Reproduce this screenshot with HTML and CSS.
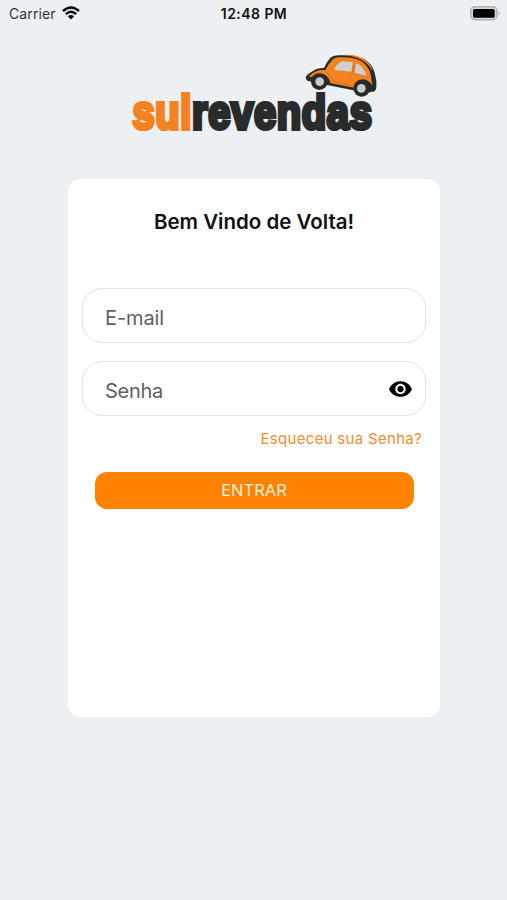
FILE: index.html
```html
<!DOCTYPE html>
<html lang="pt-BR">
<head>
<meta charset="utf-8">
<title>Sul Revendas</title>
<link rel="stylesheet" href="styles.css">
</head>
<body>
<header class="status">
  <div class="carrier"><span>Carrier</span>
    <svg class="wifi" viewBox="0 0 18 14"><g fill="none" stroke="#080808" stroke-width="2.4"><path d="M1 5Q9-2 17 5"/><path d="M3.8 8.1Q9 3.5 14.2 8.1"/></g><path fill="#080808" d="M5.9 10.2Q9 7.6 12.1 10.2L9 13.5Z"/></svg>
  </div>
  <div class="time">12:48 PM</div>
  <svg class="battery" viewBox="0 0 31 15"><rect x=".8" y=".8" width="26" height="13" rx="4" fill="#d8dadb" stroke="#b0b2b3" stroke-width="1.4"/><rect x="3" y="3" width="21.700" height="8.800" rx="1.500"/><path d="M28.400 5q2.200 2.300 0 4.600z" fill="#aaa"/></svg>
</header>
<main>
  <svg class="logo" viewBox="125 50 260 90" role="img" aria-label="sulrevendas">
    <text class="wordmark" x="132.500" y="129" textLength="240" lengthAdjust="spacingAndGlyphs"><tspan class="sul">sul</tspan><tspan class="rev">revendas</tspan></text>
    <g transform="translate(300 50) scale(.33333)">
      <path fill="#292a2a" d="M17 81Q22 72 33 67Q50 53 72 54Q80 37 90 25Q98 16 117 16L151 16Q184 19 204 36Q222 51 226 78Q231 92 229 112Q227 128 214 125L202 129L96 108L22 92Q17 88 17 81Z"/>
      <path fill="#f58220" d="M28 78Q50 57 76 61Q84 43 97 29Q106 21 125 22L152 23Q180 27 194 42Q213 60 214 87L217 108Q209 91 190 88Q169 87 161 113L91 99Q87 79 70 72Q52 68 39 79L31 82Z"/>
      <path fill="#f58220" d="M130 15Q176 11 202 36Q217 50 219 64Q201 33 170 23Q149 16 130 15Z"/>
      <path fill="#d0d0d0" d="M104 54Q114 39 128 34L159 37L154 65L105 60ZM168 40Q189 46 200 77L164 68Z"/>
      <path d="M80 66Q86 82 103 94L160 110M162 40L156 73" fill="none" stroke="#b95715" stroke-width="1.500"/>
      <circle cx="58" cy="95" r="25" fill="#292a2a"/><circle cx="59" cy="95" r="13" fill="#cacaca"/>
      <circle cx="185" cy="115" r="25" fill="#292a2a"/><circle cx="184" cy="115" r="13" fill="#cacaca"/>
    </g>
  </svg>
  <section class="card">
    <h1>Bem Vindo de Volta!</h1>
    <div class="field"><span class="email">E-mail</span></div>
    <div class="field"><span class="senha">Senha</span>
      <svg class="eye" viewBox="1 4.500 22 15"><path d="M12 4.500C7 4.500 2.730 7.610 1 12c1.730 4.390 6 7.500 11 7.500s9.270-3.110 11-7.500c-1.730-4.390-6-7.500-11-7.500zM12 17c-2.760 0-5-2.240-5-5s2.240-5 5-5 5 2.240 5 5-2.240 5-5 5zm0-8c-1.660 0-3 1.340-3 3s1.340 3 3 3 3-1.340 3-3-1.340-3-3-3z"/></svg>
    </div>
    <a class="forgot">Esqueceu sua Senha?</a>
    <button type="button">ENTRAR</button>
  </section>
</main>
</body>
</html>
```

FILE: styles.css
```css
* { box-sizing: border-box; }
body {
  margin: 0;
  height: 900px;
  background: #ecf0f3;
  color: #111;
  font-family: Inter, "Liberation Sans", sans-serif;
}
.status {
  display: grid;
  grid-template-columns: 1fr auto 1fr;
  align-items: center;
  height: 28px;
  padding: 0 6px 2px 9px;
}
.carrier { display: flex; align-items: center; gap: 6px; font-size: 14px; letter-spacing: .1px; color: #303235; }
.wifi { width: 18px; height: 14px; }
.time { margin-right: 2px; font-size: 14px; font-weight: 600; letter-spacing: .45px; }
.battery { width: 31px; height: 15px; justify-self: end; }
main { display: flex; flex-direction: column; align-items: center; }
.logo { display: block; overflow: visible; width: 260px; height: 90px; margin: 22px 0 0 3px; }
.wordmark { font: 700 49px "Liberation Sans Narrow", "Liberation Sans", sans-serif; stroke-width: 4.2; letter-spacing: .8px; }
.sul { fill: #f58220; stroke: #f58220; }
.rev { fill: #292a2a; stroke: #292a2a; }
.card {
  display: flex;
  flex-direction: column;
  width: 372px;
  height: 538px;
  margin-top: 39px;
  margin-left: 1px;
  padding: 29px 14px 0;
  background: #fff;
  border-radius: 12px;
}
h1 { margin: 0 0 53px; font-size: 20.500px; line-height: 27px; font-weight: 600; text-align: center; }
.field {
  display: flex;
  align-items: center;
  justify-content: space-between;
  height: 55px;
  margin-bottom: 18px;
  padding: 5px 13px 0 22px;
  border: 1px solid #e3e3e5;
  border-radius: 20px;
  font-size: 20px;
  color: #606060;
}
.email { letter-spacing: -.1px; }
.senha { letter-spacing: -.3px; }
.eye { width: 23px; height: 16px; margin-top: -4px; fill: #000; }
.forgot { margin: -5px 4px 0 0; align-self: flex-end; font-size: 15px; line-height: 20px; letter-spacing: .3px; color: #f98b2b; }
button {
  width: 319px;
  height: 37px;
  margin: 23px auto 0 12.500px;
  padding: 0 0 1px;
  border: 0;
  border-radius: 12px;
  background: #ff8200;
  color: #fff0df;
  font: 400 16.500px Inter, sans-serif;
}
```
